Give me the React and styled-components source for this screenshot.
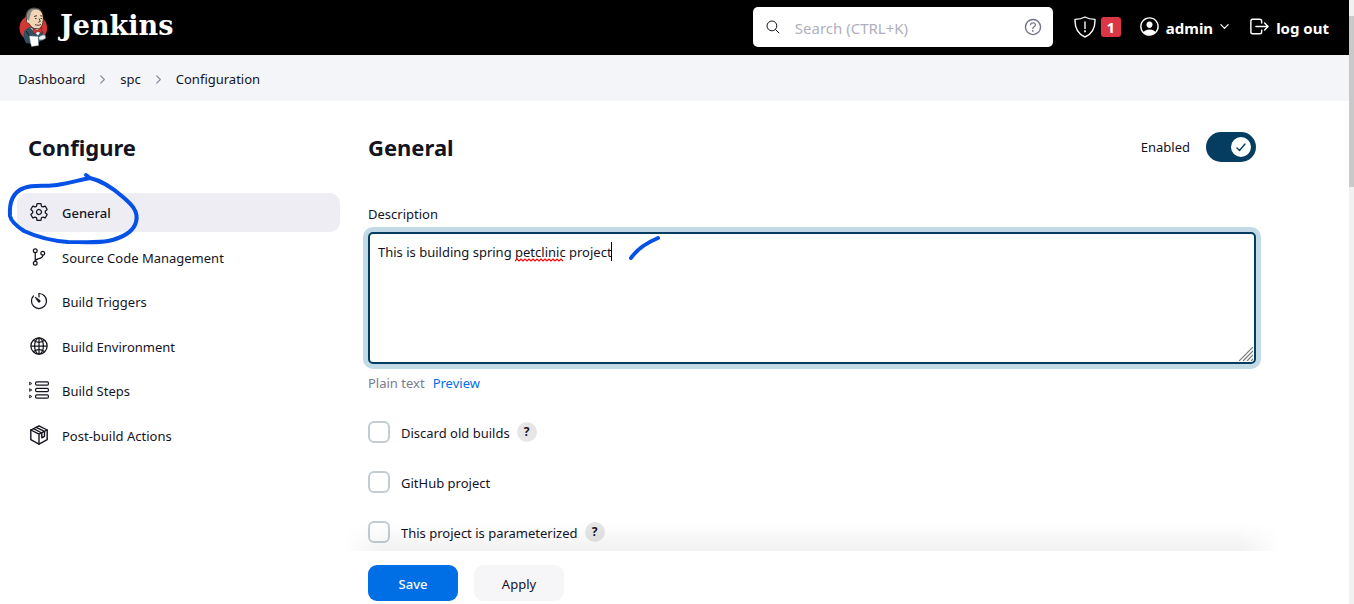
import React from "react";
import styled, { createGlobalStyle, css } from "styled-components";
import {
  IoSettingsOutline,
  IoGitBranchOutline,
  IoTimerOutline,
  IoGlobeOutline,
  IoSearchOutline,
  IoHelpCircleOutline,
  IoPersonCircleOutline,
  IoLogOutOutline,
  IoChevronDownOutline,
  IoChevronForwardOutline,
} from "react-icons/io5";

const INK = "#14141f";
const NAVY = "#053d61";
const BLUE = "#006fe6";
const PEN = "#0550e6";

const GlobalStyle = createGlobalStyle`
  *, *::before, *::after { box-sizing: border-box; }
  html { overflow: hidden; }
  body {
    margin: 0;
    background: #fff;
    color: ${INK};
    font: 400 13px/20px "Noto Sans", "Open Sans", sans-serif;
  }
  button, input, textarea { font: inherit; color: inherit; }
  a { color: inherit; text-decoration: none; }
  svg { display: block; flex: none; }
`;

const Shell = styled.div`
  display: flex;
  min-height: 100vh;
`;

const Page = styled.div`
  position: relative;
  display: flex;
  flex-direction: column;
  flex: 1;
  min-width: 0;
`;

const ScrollTrack = styled.div`
  width: 5px;
  padding-top: 16px;
  background: #f1f1f1;
`;

const ScrollThumb = styled.div`
  height: 171px;
  background: #c9c9c9;
`;

const Header = styled.header`
  display: flex;
  align-items: center;
  height: 55px;
  padding: 0 20px 2px 18px;
  background: #000;
  color: #fff;
`;

const Brand = styled.a`
  display: flex;
  align-items: center;
  gap: 10px;
  margin-right: auto;
`;

const Wordmark = styled.span`
  padding-bottom: 2px;
  font: 700 27px/32px "DejaVu Serif", serif;
`;

const SearchBox = styled.label`
  display: flex;
  align-items: center;
  width: 300px;
  height: 40px;
  margin-right: 21px;
  padding: 0 9px 0 12px;
  border-radius: 5px;
  background: #fff;
  color: ${INK};
`;

const SearchInput = styled.input`
  flex: 1;
  min-width: 0;
  margin-left: 14px;
  padding: 2px 0 0;
  border: 0;
  outline: 0;
  background: none;
  font-size: 15px;
  &::placeholder { color: #b0b0be; opacity: 1; }
`;

const IconButton = styled.button`
  display: flex;
  align-items: center;
  padding: 0;
  border: 0;
  background: none;
  color: ${(p) => p.$color || "inherit"};
`;

const Badge = styled.span`
  width: 20px;
  margin-left: 5px;
  border-radius: 3px;
  background: #dc3545;
  font-size: 15px;
  font-weight: 700;
  text-align: center;
`;

const HeaderLink = styled.a`
  display: flex;
  align-items: center;
  gap: 5px;
  margin-left: ${(p) => p.$gap}px;
  font-size: 15px;
  font-weight: 700;
  span { padding-top: 2px; }
`;

const Breadcrumbs = styled.nav`
  display: flex;
  align-items: center;
  gap: 11px;
  height: 46px;
  padding: 2px 18px 0;
  background: #f4f5f8;
  svg { color: #8c8ca3; stroke-width: 20px; }
`;

const Body = styled.div`
  display: flex;
  flex: 1;
`;

const Sidebar = styled.aside`
  flex: none;
  width: 340px;
  padding: 30px 0 0 17px;
`;

const Title = styled.h1`
  margin: 0;
  font-size: 22px;
  font-weight: 700;
  line-height: 32px;
`;

const SideTitle = styled(Title)`
  padding-left: 11px;
`;

const SideNav = styled.nav`
  display: flex;
  flex-direction: column;
  justify-content: space-between;
  height: 262px;
  margin-top: 30px;
`;

const SideLink = styled.a`
  display: flex;
  align-items: center;
  gap: 13px;
  height: 39px;
  padding: 0 0 1px 12px;
  border-radius: 10px;
  ${(p) => p.$active && css`
    background: #ededf3;
    font-weight: 500;
  `}
  span { padding-top: 2px; }
  svg { overflow: visible; }
`;

const Main = styled.main`
  display: flex;
  flex-direction: column;
  flex: 1;
  min-width: 0;
  padding: 30px 93px 0 28px;
`;

const TitleRow = styled.div`
  display: flex;
  align-items: center;
  justify-content: space-between;
`;

const Toggle = styled.label`
  display: flex;
  align-items: center;
  gap: 16px;
`;

const SwitchTrack = styled.span`
  position: relative;
  display: flex;
  align-items: center;
  justify-content: flex-end;
  width: 50px;
  height: 30px;
  padding-right: 5px;
  border-radius: 15px;
  background: ${NAVY};
`;

const SwitchInput = styled.input`
  position: absolute;
  inset: 0;
  width: 100%;
  height: 100%;
  margin: 0;
  opacity: 0;
`;

const SwitchKnob = styled.span`
  display: flex;
  align-items: center;
  justify-content: center;
  width: 20px;
  height: 20px;
  border-radius: 50%;
  background: #fff;
`;

const FieldLabel = styled.label`
  margin-top: 41px;
`;

const Editor = styled.div`
  position: relative;
  margin-top: 8px;
`;

const Description = styled.textarea`
  display: block;
  width: 100%;
  height: 132px;
  padding: 8px;
  border: 2px solid ${NAVY};
  border-radius: 5px;
  outline: 0;
  box-shadow: 0 0 0 5px #c2d9e6;
  background: #fff;
  line-height: 20px;
  resize: none;
`;

const SpellingMark = styled.svg`
  position: absolute;
  top: 26px;
  left: 147px;
`;

const Caret = styled.i`
  position: absolute;
  top: 10px;
  left: 243px;
  width: 1px;
  height: 19px;
  background: #000;
`;

const Grip = styled.svg`
  position: absolute;
  right: 3px;
  bottom: 3px;
`;

const PreviewRow = styled.div`
  display: flex;
  gap: 8px;
  margin-top: 9px;
  color: #7b7b92;
  a { color: ${BLUE}; }
`;

const Options = styled.div`
  display: flex;
  flex-direction: column;
  gap: 28px;
  margin-top: 28px;
  padding-bottom: 8px;
`;

const Option = styled.div`
  display: flex;
  align-items: center;
  height: 22px;
`;

const OptionLabel = styled.label`
  display: flex;
  align-items: center;
  gap: 11px;
  span { padding-top: 2px; }
`;

const Checkbox = styled.input`
  appearance: none;
  width: 22px;
  height: 22px;
  margin: 0;
  border: 2px solid #c3ccd1;
  border-radius: 6px;
  background: #fff;
`;

const Help = styled.button`
  width: 20px;
  height: 20px;
  margin-left: 7px;
  padding: 0;
  border: 0;
  border-radius: 50%;
  background: #e6e6e6;
  font-size: 12px;
  font-weight: 700;
  line-height: 20px;
`;

const ActionBar = styled.div`
  position: sticky;
  bottom: 0;
  display: flex;
  gap: 16px;
  padding: 14px 0 3px;
  background: #fff;
  &::before {
    content: "";
    position: absolute;
    right: -25px;
    bottom: 100%;
    left: -25px;
    height: 28px;
    background: linear-gradient(to top, rgba(0, 0, 0, 0.055), rgba(0, 0, 0, 0));
    mask-image: linear-gradient(to right, transparent, #000 40px, #000 calc(100% - 40px), transparent);
    pointer-events: none;
  }
`;

const ActionButton = styled.button`
  width: 90px;
  height: 36px;
  padding: 2px 0 0;
  border: 0;
  border-radius: 9px;
  background: ${(p) => (p.$primary ? BLUE : "#f6f6f9")};
  color: ${(p) => (p.$primary ? "#fff" : INK)};
  font-weight: ${(p) => (p.$primary ? 500 : 400)};
`;

const PenStrokes = styled.svg`
  position: absolute;
  top: 0;
  left: 0;
  pointer-events: none;
`;

const Butler = () => (
  <svg width="32" height="40" viewBox="0 0 32 40" aria-hidden="true">
    <ellipse cx="15.300" cy="21" rx="13.800" ry="13.500" fill="#d33833" />
    <path d="M6 25c1-3 4-5 8-5l8 1c3 2 4 6 4 10l-3 3-8 3-7-1c-2-3-3-7-2-11z" fill="#335061" />
    <path d="M8.500 13C7 6 11 1.500 16 1.500c6 0 9 4 9 9 0 6-1 11-6 11-4 0-6-2-8-5-2 0-3-2-2.500-3.500z" fill="#f0d6b7" />
    <path d="M8 14C6.500 6 10 .7 16 .7c4 0 6 1 8 4-3-2-6-2.500-9-1.500-3 2-2 5-3 6l-1 4.500-1.500-1.500z" fill="#8d8c88" />
    <path d="M8.500 13C7 6 11 1.200 16 1.200c6 0 9.300 4 9.300 9.300 0 6-1.300 11.500-6.300 11.500-4 0-6-2-8-5.500-2 0-3-2-2.500-3.500z" fill="none" stroke="#3a3025" strokeWidth=".8" />
    <path d="M16 9.500l3-.8m3.300 0l2.200.5M17 11.500h1.500m4 0H24m-3 0l1.300 3-2 .8M17 17.500c2 1 4 1 6 0" fill="none" stroke="#49372b" strokeWidth="1" />
    <path d="M12 20.500l8 8 3-4-1-3-6 1z" fill="#f4f4f4" />
    <path d="M15 21.500l4 1.800 4.500-2.800.8 5.500-4.300-1.500-4.500 2z" fill="#d33833" stroke="#81201d" strokeWidth=".7" />
    <path d="M8 24l4 6m9 0l3 4" stroke="#10202a" strokeWidth="1" />
    <path d="M11.500 29l8.500.5.500 9-7 1-1-4z" fill="#fff" stroke="#9aa6ad" strokeWidth=".4" />
    <path d="M20.500 30.500c2-2 4-3 6.500-2.500l1 3-3 2h-4z" fill="#edf0f2" stroke="#536571" strokeWidth=".8" />
  </svg>
);

const ShieldAlert = () => (
  <svg width="22" height="22" viewBox="0 0 22 22" fill="none" stroke="#fff" strokeWidth="1.4" strokeLinecap="round" strokeLinejoin="round">
    <path d="M11 1C8 2.700 4.500 3.300 1 3.400C.7 12 3.600 18 11 21C18.400 18 21.300 12 21 3.400C17.500 3.300 14 2.700 11 1Z" />
    <path d="M11 6v6.500" />
    <circle cx="11" cy="15.300" r=".4" fill="#fff" />
  </svg>
);

const StepsIcon = () => (
  <svg width="20" height="20" viewBox="0 0 20 20" fill="none" stroke="currentColor" strokeWidth="1.2" strokeLinejoin="round">
    {[3.5, 10, 16.5].map((y) => (
      <g key={y}>
        <rect x="6.600" y={y - 1.7} width="12.800" height="3.400" rx="1.200" />
        <path d={`M.6 ${y - 1.3}L2.800 ${y}L.6 ${y + 1.3}Z`} strokeWidth=".9" />
      </g>
    ))}
  </svg>
);

const PackageIcon = () => (
  <svg width="20" height="20" viewBox="0 0 20 20" fill="none" stroke="currentColor" strokeWidth="1.400" strokeLinejoin="round" strokeLinecap="round">
    <path d="M10 .8L18.200 5V14.700L10 19.200L1.800 14.700V5Z" />
    <path d="M1.800 5L10 9.200L18.200 5M10 9.200V19M4.500 3.700L12.800 8V12.800L15.500 11.300V6.400L7.200 2.300" />
  </svg>
);

const sideIcon = { size: 20, stroke: "currentColor", strokeWidth: 8 };

const SECTIONS = [
  { label: "General", icon: <IoSettingsOutline size={20} />, active: true },
  { label: "Source Code Management", icon: <IoGitBranchOutline {...sideIcon} /> },
  { label: "Build Triggers", icon: <IoTimerOutline {...sideIcon} /> },
  { label: "Build Environment", icon: <IoGlobeOutline {...sideIcon} /> },
  { label: "Build Steps", icon: <StepsIcon /> },
  { label: "Post-build Actions", icon: <PackageIcon /> },
];

const OPTIONS = [
  { id: "discard", label: "Discard old builds", help: true },
  { id: "github", label: "GitHub project", help: false },
  { id: "params", label: "This project is parameterized", help: true },
];

export default function App() {
  return (
    <>
      <GlobalStyle />
      <Shell>
        <Page>
          <Header>
            <Brand href="#">
              <Butler />
              <Wordmark>Jenkins</Wordmark>
            </Brand>
            <SearchBox>
              <IoSearchOutline size={16} />
              <SearchInput type="search" placeholder="Search (CTRL+K)" aria-label="Search" />
              <IconButton type="button" aria-label="Search help" $color="#73738c">
                <IoHelpCircleOutline size={22} />
              </IconButton>
            </SearchBox>
            <IconButton type="button" aria-label="Security warnings">
              <ShieldAlert />
              <Badge>1</Badge>
            </IconButton>
            <HeaderLink href="#" $gap={17}>
              <IoPersonCircleOutline size={23} />
              <span>admin</span>
              <IoChevronDownOutline size={13} />
            </HeaderLink>
            <HeaderLink href="#" $gap={17}>
              <IoLogOutOutline size={23} />
              <span>log out</span>
            </HeaderLink>
          </Header>

          <Breadcrumbs aria-label="Breadcrumb">
            <a href="#">Dashboard</a>
            <IoChevronForwardOutline size={13} />
            <a href="#">spc</a>
            <IoChevronForwardOutline size={13} />
            <a href="#">Configuration</a>
          </Breadcrumbs>

          <Body>
            <Sidebar>
              <SideTitle>Configure</SideTitle>
              <SideNav>
                {SECTIONS.map((s) => (
                  <SideLink key={s.label} href="#" $active={s.active}>
                    {s.icon}
                    <span>{s.label}</span>
                  </SideLink>
                ))}
              </SideNav>
            </Sidebar>

            <Main>
              <TitleRow>
                <Title as="h2">General</Title>
                <Toggle>
                  Enabled
                  <SwitchTrack>
                    <SwitchInput type="checkbox" defaultChecked />
                    <SwitchKnob>
                      <svg width="10" height="10" viewBox="0 0 10 10" fill="none" stroke={NAVY} strokeWidth="1.400" strokeLinecap="round" strokeLinejoin="round">
                        <path d="M1 6l2.500 2.500L9 2" />
                      </svg>
                    </SwitchKnob>
                  </SwitchTrack>
                </Toggle>
              </TitleRow>

              <FieldLabel htmlFor="description">Description</FieldLabel>
              <Editor>
                <Description id="description" spellCheck={false} defaultValue="This is building spring petclinic project" />
                <SpellingMark width="50" height="4" viewBox="0 0 50 4" aria-hidden="true">
                  <path d="M0 3l2-2 2 2 2-2 2 2 2-2 2 2 2-2 2 2 2-2 2 2 2-2 2 2 2-2 2 2 2-2 2 2 2-2 2 2 2-2 2 2 2-2 2 2 2-2 2 2" fill="none" stroke="#f00" strokeWidth="1.200" />
                </SpellingMark>
                <Caret />
                <Grip width="14" height="14" viewBox="0 0 14 14" fill="none" stroke="#777" strokeWidth="1.200" aria-hidden="true">
                  <path d="M0 14L14 0M4 14L14 4M8 14L14 8M12 14L14 12" />
                </Grip>
              </Editor>
              <PreviewRow>
                <span>Plain text</span>
                <a href="#">Preview</a>
              </PreviewRow>

              <Options>
                {OPTIONS.map((o) => (
                  <Option key={o.id}>
                    <OptionLabel>
                      <Checkbox type="checkbox" name={o.id} />
                      <span>{o.label}</span>
                    </OptionLabel>
                    {o.help && <Help type="button" aria-label={`Help: ${o.label}`}>?</Help>}
                  </Option>
                ))}
              </Options>

              <ActionBar>
                <ActionButton type="submit" $primary>Save</ActionButton>
                <ActionButton type="button">Apply</ActionButton>
              </ActionBar>
            </Main>
          </Body>

          <PenStrokes width="670" height="270" viewBox="0 0 670 270" fill="none" stroke={PEN} strokeWidth="4" strokeLinecap="round" strokeLinejoin="round" aria-hidden="true">
            <path d="M86 175L90 178C80 180 69 183 57 185C46 187 34 184 24 188C13 192 9 202 10 216C11 222 18 227 24 231C37 237 54 241 68 242C82 242 98 243 108 241C123 238 134 231 136 222C139 211 131 204 123 197C115 190 103 181 90 178" />
            <path d="M631 258C637 249 646 243 658 238" />
          </PenStrokes>
        </Page>
        <ScrollTrack aria-hidden="true">
          <ScrollThumb />
        </ScrollTrack>
      </Shell>
    </>
  );
}
